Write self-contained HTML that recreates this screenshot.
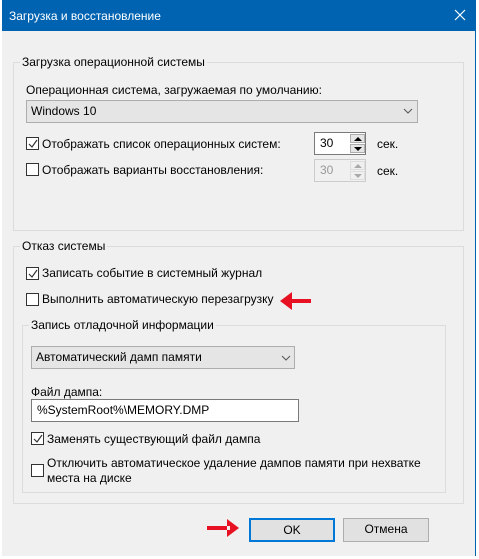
<!DOCTYPE html><html><head><meta charset="utf-8"><style>
*{box-sizing:border-box}
body{margin:0;width:479px;height:559px;background:#fff;font-family:"Liberation Sans",sans-serif;font-size:12px;color:#000;position:relative;overflow:hidden}
.win{position:absolute;left:2px;top:0;width:474px;height:556px;background:#f0f0f0;border-right:1px solid #0063b1}
.title{position:absolute;left:0;top:0;width:474px;height:31px;background:#0063b1;color:#fff;font-size:12px}
.a{position:absolute;white-space:nowrap}
.grp{position:absolute;border:1px solid #dcdcdc}
.leg{position:absolute;background:#f0f0f0;padding:0 2px;white-space:nowrap}
.cb{position:absolute;width:13px;height:13px;border:1px solid #333;background:#fff}
.cb svg{position:absolute;left:0;top:0}
.combo{position:absolute;background:#e5e5e5;border:1px solid #adadad;padding-left:4px;line-height:20px}
.btn{position:absolute;background:#e1e1e1;border:1px solid #adadad;text-align:center;line-height:21px}
.sp{position:absolute;width:15px;height:9px;background:#e5e5e5;border:1px solid #adadad}
.sp svg{position:absolute;left:3px;top:1px}
</style></head><body>
<div class="win">
<div class="title"><span class="a" style="left:7px;top:9px">Загрузка и восстановление</span>
<svg class="a" style="left:452px;top:9px" width="12" height="12"><path d="M1 1L11 11M11 1L1 11" stroke="#fff" stroke-width="1.2"/></svg></div>
</div>
<div class="grp" style="left:13px;top:62px;width:451px;height:169px"></div>
<span class="leg" style="left:20px;top:55px">Загрузка операционной системы</span>
<span class="a" style="left:26px;top:83px">Операционная система, загружаемая по умолчанию:</span>
<div class="combo" style="left:26px;top:100px;width:392px;height:23px">Windows 10</div>
<svg class="a" style="left:403px;top:108px" width="10" height="6"><path d="M1 1L5 5L9 1" stroke="#555" fill="none"/></svg>
<div class="cb" style="left:26px;top:137px"><svg width="12" height="12"><path d="M2 6L5 9L10 2" stroke="#333" fill="none" stroke-width="1.2"/></svg></div>
<span class="a" style="left:42px;top:137px">Отображать список операционных систем:</span>
<div class="a" style="left:314px;top:132px;width:52px;height:23px;border:1px solid #7a7a7a;background:#fff;padding:3px 5px">30</div>
<div class="sp" style="left:350px;top:134px"><svg width="8" height="5"><path d="M0 5L4 1L8 5Z" fill="#000"/></svg></div>
<div class="sp" style="left:350px;top:144px"><svg width="8" height="5"><path d="M0 1L4 5L8 1Z" fill="#000"/></svg></div>
<span class="a" style="left:377px;top:137px">сек.</span>
<div class="cb" style="left:26px;top:163px"></div>
<span class="a" style="left:42px;top:163px">Отображать варианты восстановления:</span>
<div class="a" style="left:314px;top:159px;width:52px;height:23px;border:1px solid #ccc;background:#f0f0f0;color:#999;padding:3px 5px">30</div>
<div class="sp" style="left:350px;top:161px;background:#f0f0f0;border-color:#ddd"><svg width="8" height="5"><path d="M0 5L4 1L8 5Z" fill="#aaa"/></svg></div>
<div class="sp" style="left:350px;top:171px;background:#f0f0f0;border-color:#ddd"><svg width="8" height="5"><path d="M0 1L4 5L8 1Z" fill="#aaa"/></svg></div>
<span class="a" style="left:377px;top:164px">сек.</span>

<div class="grp" style="left:13px;top:246px;width:451px;height:258px"></div>
<span class="leg" style="left:20px;top:239px">Отказ системы</span>
<div class="cb" style="left:26px;top:267px"><svg width="12" height="12"><path d="M2 6L5 9L10 2" stroke="#333" fill="none" stroke-width="1.2"/></svg></div>
<span class="a" style="left:42px;top:266px">Записать событие в системный журнал</span>
<div class="cb" style="left:26px;top:293px"></div>
<span class="a" style="left:42px;top:292px">Выполнить автоматическую перезагрузку</span>
<svg class="a" style="left:278px;top:290px" width="35" height="22"><path d="M12 9H33V13H12Z M2 11L14 2V20Z" fill="#e81123"/></svg>

<div class="grp" style="left:22px;top:325px;width:424px;height:168px"></div>
<span class="leg" style="left:29px;top:318px">Запись отладочной информации</span>
<div class="combo" style="left:31px;top:346px;width:264px;height:23px">Автоматический дамп памяти</div>
<svg class="a" style="left:281px;top:355px" width="10" height="6"><path d="M1 1L5 5L9 1" stroke="#555" fill="none"/></svg>
<span class="a" style="left:31px;top:385px">Файл дампа:</span>
<div class="a" style="left:31px;top:399px;width:268px;height:23px;border:1px solid #7a7a7a;background:#fff;padding:3px 5px">%SystemRoot%\MEMORY.DMP</div>
<div class="cb" style="left:31px;top:432px"><svg width="12" height="12"><path d="M2 6L5 9L10 2" stroke="#333" fill="none" stroke-width="1.2"/></svg></div>
<span class="a" style="left:47px;top:432px">Заменять существующий файл дампа</span>
<div class="cb" style="left:31px;top:464px"></div>
<span class="a" style="left:47px;top:456px;line-height:15px">Отключить автоматическое удаление дампов памяти при нехватке<br>места на диске</span>

<svg class="a" style="left:206px;top:517px" width="35" height="22"><path d="M1 9H24V13H1Z M33 11L21 2V20Z" fill="#e81123"/></svg>
<div class="btn" style="left:249px;top:518px;width:86px;height:24px;border:2px solid #0078d7;line-height:20px">OK</div>
<div class="btn" style="left:343px;top:518px;width:86px;height:24px">Отмена</div>
</body></html>
